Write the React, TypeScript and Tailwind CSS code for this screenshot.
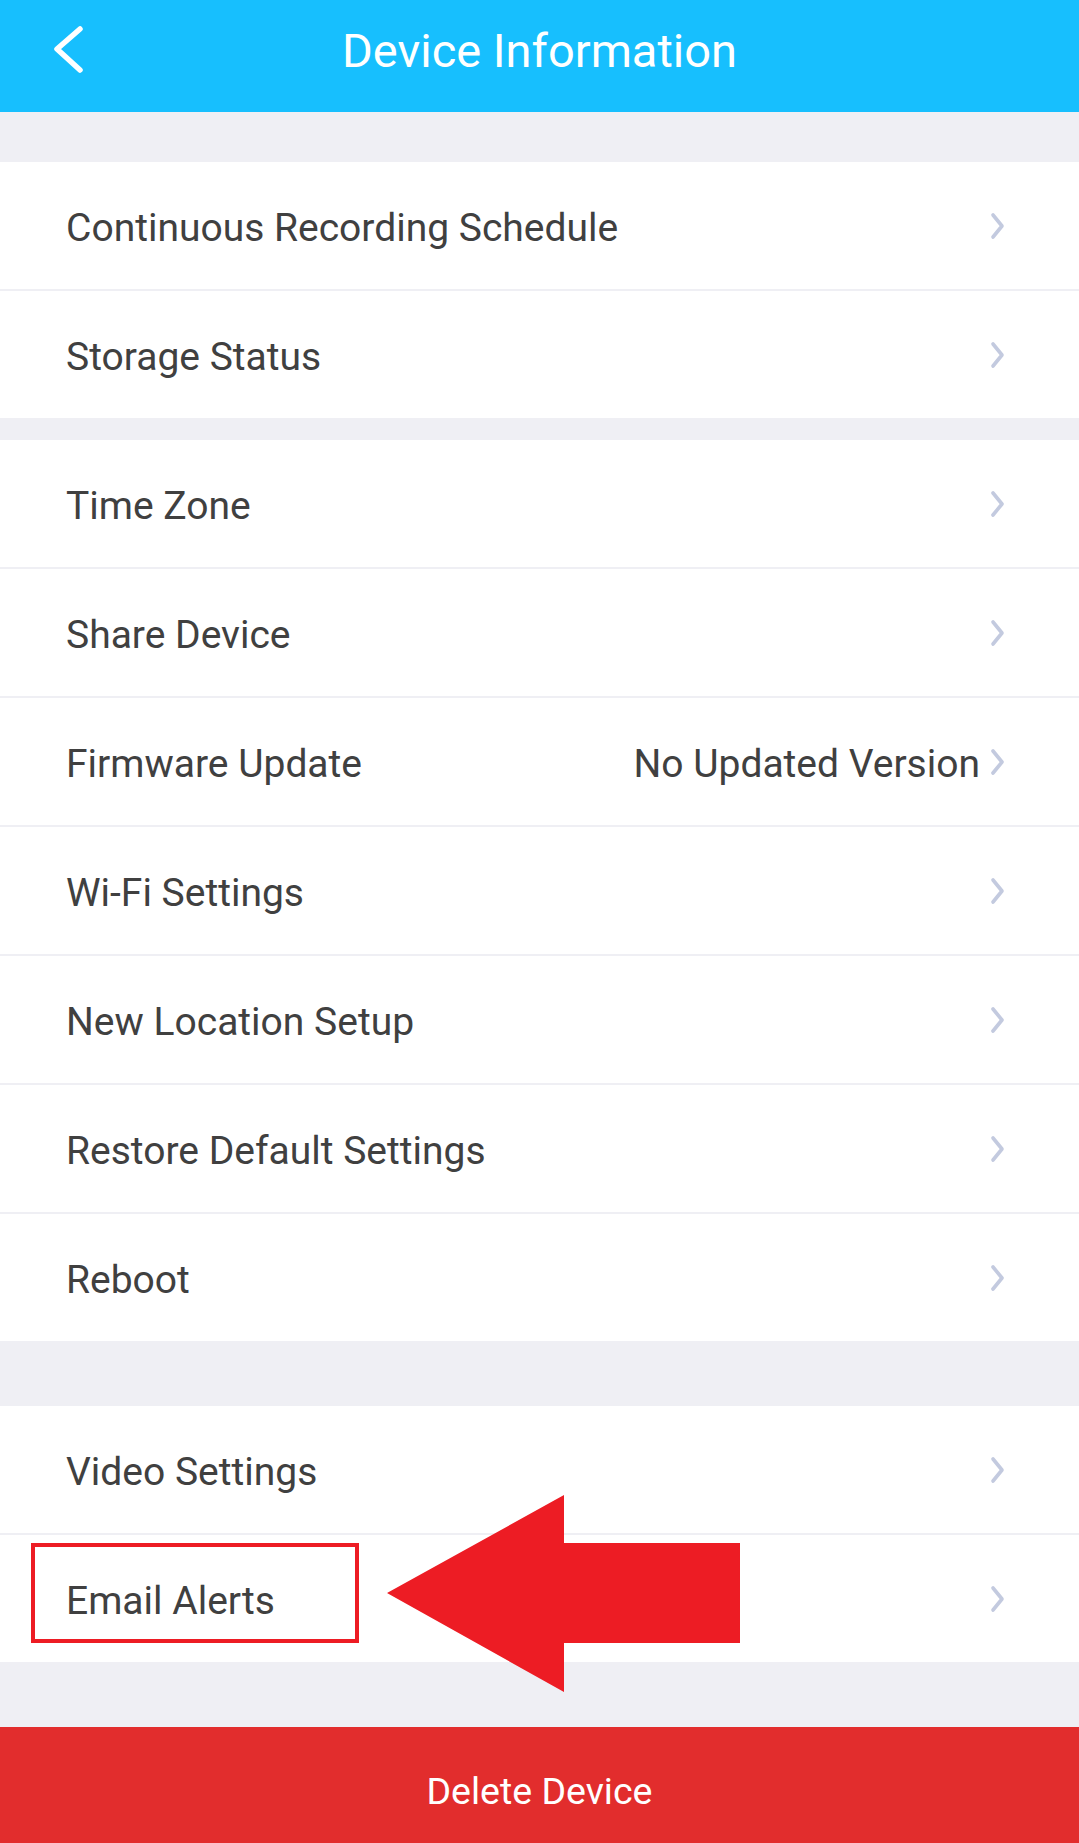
import React from "react";

const Chevron = () => (
  <svg width="18" height="28" viewBox="0 0 18 28" className="shrink-0">
    <polyline points="4,3 13,14 4,25" fill="none" stroke="#c3cadf" strokeWidth="3.6" strokeLinecap="round" strokeLinejoin="round" />
  </svg>
);

type RowProps = { label: string; value?: string; last?: boolean };

const Row = ({ label, value, last }: RowProps) => (
  <div className={`flex h-[127px] items-center bg-white pl-[66px] pr-[72px] ${last ? "" : "border-b-2 border-[#efeff4] box-content"}`}>
    <span className="flex-1 pt-[6px] text-[39px] text-[#404040]">{label}</span>
    {value && <span className="mr-[9px] pt-[6px] text-[39px] text-[#404040]">{value}</span>}
    <Chevron />
  </div>
);

export default function App() {
  return (
    <div className="relative flex min-h-[1843px] w-[1079px] flex-col bg-[#efeff4]" style={{ fontFamily: "Roboto, 'Noto Sans', sans-serif" }}>
      <div className="relative flex h-[112px] items-center justify-center bg-[#17bffe]">
        <svg className="absolute left-[50px] top-[26px]" width="36" height="48" viewBox="0 0 36 48">
          <polyline points="30,3 7,23 30,44" fill="none" stroke="white" strokeWidth="5.5" strokeLinecap="round" strokeLinejoin="round" />
        </svg>
        <span className="pb-[10px] text-[47px] text-white">Device Information</span>
      </div>

      <div className="h-[50px]" />
      <div className="flex flex-col">
        <Row label="Continuous Recording Schedule" />
        <Row label="Storage Status" last />
      </div>

      <div className="h-[22px]" />
      <div className="flex flex-col">
        <Row label="Time Zone" />
        <Row label="Share Device" />
        <Row label="Firmware Update" value="No Updated Version" />
        <Row label="Wi-Fi Settings" />
        <Row label="New Location Setup" />
        <Row label="Restore Default Settings" />
        <Row label="Reboot" last />
      </div>

      <div className="h-[65px]" />
      <div className="flex flex-col">
        <Row label="Video Settings" />
        <Row label="Email Alerts" last />
      </div>

      <div className="h-[65px]" />
      <div className="flex h-[116px] items-center justify-center bg-[#e22d2d]">
        <span className="pt-[12px] text-[37.5px] text-white">Delete Device</span>
      </div>

      {/* annotation box */}
      <div className="pointer-events-none absolute left-[31px] top-[1543px] h-[100px] w-[328px] border-[4px] border-[#ed1c24]" />
      {/* annotation arrow */}
      <svg className="pointer-events-none absolute left-0 top-0" width="1079" height="1843" viewBox="0 0 1079 1843">
        <polygon points="387,1593 564,1495 564,1543 740,1543 740,1643 564,1643 564,1692" fill="#ed1c24" />
      </svg>
    </div>
  );
}
